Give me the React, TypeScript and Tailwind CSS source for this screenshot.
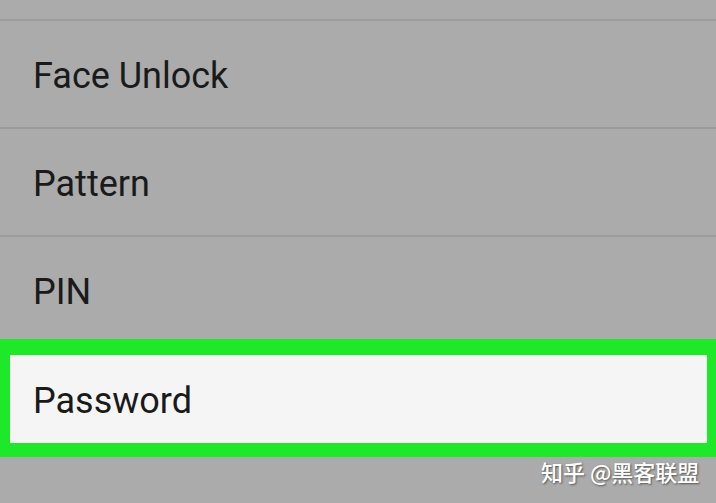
export default function App() {
  const rows = ['Face Unlock', 'Pattern', 'PIN']
  return (
    <div className="relative w-[716px] h-[503px] overflow-hidden bg-[#ababab] font-['Roboto',sans-serif] text-[#1a1a1a]">
      <div className="h-[21px] border-b-2 border-[#9b9b9b]" />
      {rows.map((label, i) => (
        <div
          key={label}
          className={`flex items-center pl-[33px] text-[36px] ${i < 2 ? 'h-[108px] pt-[4px] border-b-2 border-[#9b9b9b]' : 'h-[102px] pt-[8px]'}`}
        >
          {label}
        </div>
      ))}
      <div className="h-[118px] border-[#1ee82a] border-t-[16px] border-b-[14px] border-l-[10px] border-r-[9px] bg-[#f5f5f5] flex items-center pl-[23px] pt-[4px] text-[36px]">
        Password
      </div>
      <div className="absolute left-[541px] top-[455px] text-[22px] font-medium text-white font-['Noto_Sans_CJK_SC',sans-serif] [text-shadow:1px_1px_2px_rgba(0,0,0,0.5)]">
        知乎 @黑客联盟
      </div>
    </div>
  )
}
